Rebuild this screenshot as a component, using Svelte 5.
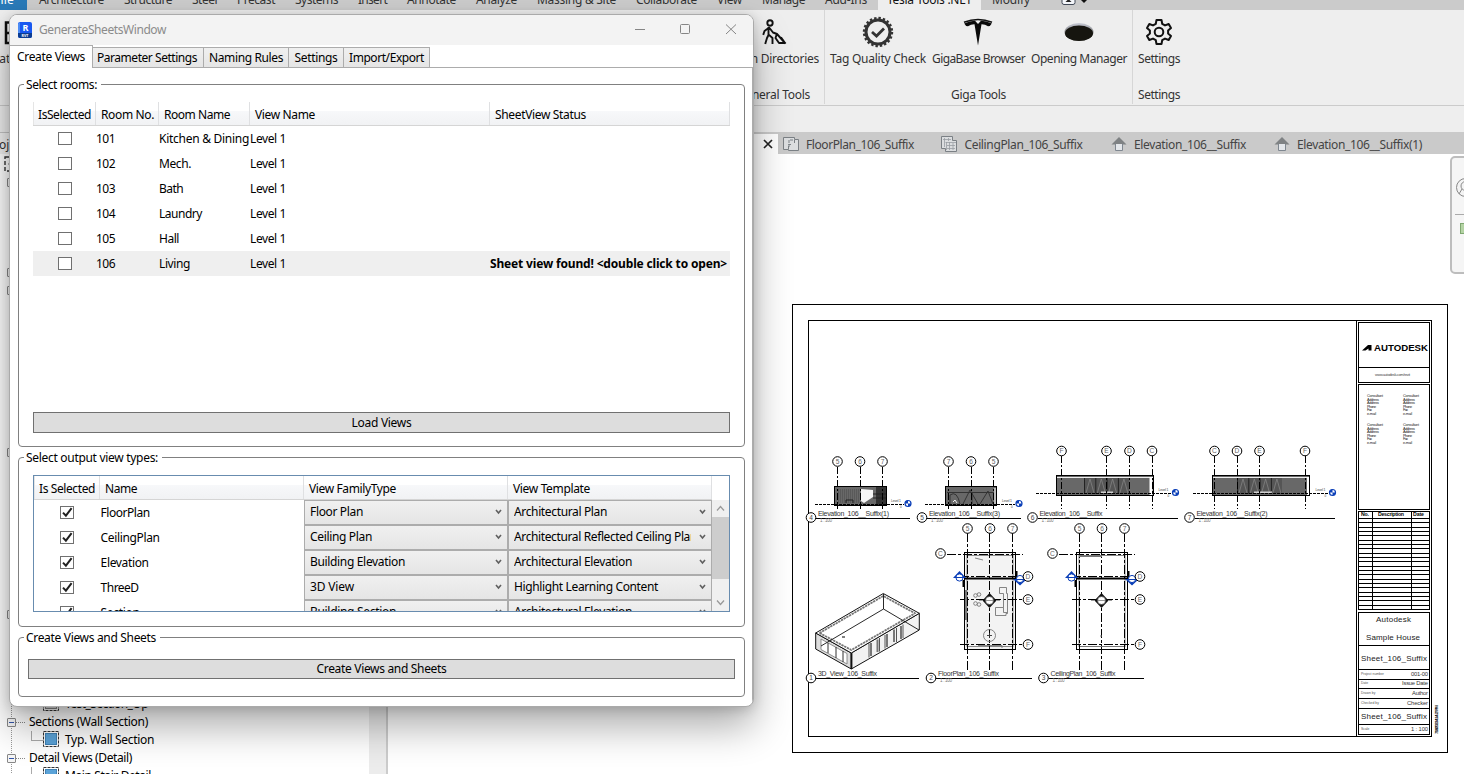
<script>
  // Spreads a label's letters so that it takes up the given width.
  function fit(node, width) {
    const natural = node.getBoundingClientRect().width;
    const count = node.textContent.length;
    if (width && count) node.style.letterSpacing = `${(width - natural) / count}px`;
  }

  const ribbonTabs = [
    ['Architecture', 65], ['Structure', 48], ['Steel', 25], ['Precast', 38], ['Systems', 43],
    ['Insert', 29], ['Annotate', 49], ['Analyze', 41], ['Massing & Site', 79], ['Collaborate', 61],
    ['View', 25], ['Manage', 43], ['Add-Ins', 42], ['Tesla Tools .NET', 85], ['Modify', 38]
  ];
  const viewTabs = [
    ['floor', 'FloorPlan_106_Suffix', 108, 27],
    ['ceiling', 'CeilingPlan_106_Suffix', 118, 28],
    ['house', 'Elevation_106__Suffix', 112, 27.5],
    ['house', 'Elevation_106__Suffix(1)', 125, 0]
  ];
  const dialogTabs = [['Parameter Settings', 100, 111], ['Naming Rules', 74, 85], ['Settings', 43, 55], ['Import/Export', 75, 86]];
  const rooms = [
    ['101', 'Kitchen & Dining', 90], ['102', 'Mech.', 32], ['103', 'Bath', 24],
    ['104', 'Laundry', 43], ['105', 'Hall', 20], ['106', 'Living', 31]
  ];
  const types = [
    ['FloorPlan', 49, 'Floor Plan', 53, 'Architectural Plan', 93],
    ['CeilingPlan', 59, 'Ceiling Plan', 62, 'Architectural Reflected Ceiling Plan', 183],
    ['Elevation', 48, 'Building Elevation', 95, 'Architectural Elevation', 118],
    ['ThreeD', 38, '3D View', 44, 'Highlight Learning Content', 144],
    ['Section', 39, 'Building Section', 86, 'Architectural Elevation', 118]
  ];
  // Rows of the project tree that lie behind the dialog; true marks an expandable one.
  const coveredRows = Array.from({ length: 29 }, (_, i) => [0, 5, 6, 15, 24].includes(i));

  const elevations = [
    { n: '4', x: 834.5, w: 52, top: 486.5, h: 19, cy: 461.5, grids: [[837.5, '5'], [860, '6'], [882.5, '7']], l0: 815, l1: 904, m: 908, ly: 504.5, t: 811, name: 'Elevation_106__Suffix(1)', nw: 71, end: 910, kind: 'a' },
    { n: '5', x: 945.5, w: 51, top: 486.5, h: 19, cy: 461.5, grids: [[948.5, '7'], [971, '6'], [993.5, '5']], l0: 925, l1: 1015, m: 1019, ly: 504.5, t: 922, name: 'Elevation_106__Suffix(3)', nw: 71, end: 1021, kind: 'b' },
    { n: '6', x: 1056.5, w: 97, top: 475.5, h: 20, cy: 451, grids: [[1061.5, 'F'], [1106.5, 'E'], [1129.5, 'D'], [1152, 'C']], l0: 1036, l1: 1171, m: 1175.5, ly: 493.5, t: 1032.5, name: 'Elevation_106__Suffix', nw: 63, end: 1178, kind: 'c', doors: 1084 },
    { n: '7', x: 1212.5, w: 97, top: 475.5, h: 20, cy: 451, grids: [[1214.5, 'C'], [1237, 'D'], [1259.5, 'E'], [1305, 'F']], l0: 1193, l1: 1328, m: 1332.5, ly: 493.5, t: 1189.5, name: 'Elevation_106__Suffix(2)', nw: 71, end: 1335, kind: 'c', doors: 1237 }
  ];
  const plans = [
    { dx: 0, n: '2', t: 931, name: 'FloorPlan_106_Suffix', nw: 61, end: 1032, fill: '#f3f3f3' },
    { dx: 112, n: '3', t: 1043.5, name: 'CeilingPlan_106_Suffix', nw: 65, end: 1144, fill: '#fff' }
  ];
  const scheduleRows = Array.from({ length: 22 }, (_, i) => Math.round(518 + i * 4.333) + 0.5);
  const consultant = ['Consultant', 'Address', 'Address', 'Phone', 'Fax', 'e-mail'];
  const fields = [['Project number', '001-00', 676, 17], ['Date', 'Issue Date', 685, 26], ['Drawn by', 'Author', 695, 16], ['Checked by', 'Checker', 705, 21], ['Scale', '1 : 100', 731, 17]];
</script>

{#snippet check(on)}
  <span class="check">
    {#if on}<svg width="11" height="11" viewBox="0 0 11 11"><path d="M1 5.6 L3.9 8.6 L9.6 1.2" fill="none" stroke="#212121" stroke-width="2" /></svg>{/if}
  </span>
{/snippet}

{#snippet bubble(x, y, label)}
  <circle cx={x} cy={y} r="4.8" fill="#fff" stroke="#000" />
  <text x={x} y={y + 2.4} font-size="6.6" text-anchor="middle" fill="#666">{label}</text>
{/snippet}

{#snippet title(t, n, name, nw, end, base, scale)}
  <path d="M{t + 5} {base + 2.5} H{end}" class="ln" />
  <circle cx={t} cy={base + 2} r="4.8" fill="#fff" stroke="#000" />
  <text x={t} y={base + 4.4} font-size="6.6" text-anchor="middle" fill="#444">{n}</text>
  <text x={t + 7} y={base} font-size="7" textLength={nw} fill="#333">{name}</text>
  {#if scale}<text x={t + 9} y={base + 6.4} font-size="4.6" textLength="12" fill="#777">1 : 100</text>{/if}
{/snippet}

{#snippet house()}
  <svg width="16" height="16" viewBox="0 0 16 16"><path d="M8 1 L15.5 8.5 H.5 Z" fill="#7f8284" /><path d="M4.5 8 V14.5 H11.5 V8" fill="#e3e6ea" stroke="#7f8790" /></svg>
{/snippet}

<div class="app">
  <div class="menubar">
    <div class="file"><span use:fit={20}>File</span></div>
    {#each ribbonTabs as [name, w]}
      <div class="rtab" class:active={name.startsWith('Tesla')}><span use:fit={w}>{name}</span></div>
    {/each}
    <svg class="ribbon-mode" width="28" height="10" viewBox="0 0 28 10"><rect x="1" y="-6" width="13" height="10.5" rx="2" fill="#f4f6fa" stroke="#424a58" /><path d="M4.5 2 L7.5 -1 L10.5 2 Z" fill="#222" /><path d="M19 -1 H27 L23 3 Z" fill="#111" /></svg>
  </div>

  <div class="ribbon">
    <section class="left-panel">
      <div class="btn">
        <svg width="32" height="32" viewBox="0 0 32 32"><path d="M6 6.5 H30 V27 H6 Z M6 17 H30 M13 6 V27" fill="none" stroke="#111" stroke-width="2.5" /></svg>
        <span>Locator</span>
      </div>
    </section>
    <section class="general">
      <div class="btn">
        <svg width="32" height="32" viewBox="0 0 32 32"><g fill="none" stroke="#111" stroke-width="1.9" stroke-linecap="square" stroke-linejoin="round"><circle cx="12" cy="7" r="2.7" /><path d="M10.5 12 L6.5 15 L5.5 18 M10.5 12 V19 L9 22 L7.5 27 M11 19 L14.5 22 V27 M11.5 12 L15 16.5 L19 18 L27 27 M18.5 19 L17.5 22 L21 27 H27 L23.5 22" /></g></svg>
        <span use:fit={91}>Open Directories</span>
      </div>
      <h3><span use:fit={73}>General Tools</span></h3>
    </section>
    <section class="giga">
      <div class="btns">
        <div class="btn">
          <svg width="32" height="32" viewBox="0 0 32 32"><circle cx="16" cy="16" r="14" fill="none" stroke="#333" stroke-width="2.4" stroke-dasharray="2.4 2" /><circle cx="16" cy="16" r="12" fill="none" stroke="#333" stroke-width="3" /><path d="M10 16 L14.5 20 L22 12.5" fill="none" stroke="#333" stroke-width="2.8" /></svg>
          <span use:fit={96}>Tag Quality Check</span>
        </div>
        <div class="btn">
          <svg width="32" height="32" viewBox="0 0 32 32"><path d="M1 6.2 Q15 .8 29 6.2" fill="none" stroke="#111" stroke-width="1.6" /><path d="M1.2 7.5 Q7 4.7 12 4.8 L15 8 L18 4.8 Q23 4.7 28.8 7.5 Q27.5 10.2 25 10.3 Q22 8.1 18.5 8.2 L15 29.5 L11.5 8.2 Q8 8.1 5 10.3 Q2.5 10.2 1.2 7.5Z" fill="#0a0a0a" /></svg>
          <span use:fit={93}>GigaBase Browser</span>
        </div>
        <div class="btn">
          <svg width="32" height="32" viewBox="0 0 32 32"><defs><linearGradient id="rim" x2="0" y2="1"><stop stop-color="#c8cbd6" /><stop offset=".6" stop-color="#777" /></linearGradient></defs><ellipse cx="16" cy="16" rx="14.5" ry="9" fill="url(#rim)" /><ellipse cx="16" cy="17.2" rx="14" ry="7.8" fill="#16150f" /></svg>
          <span use:fit={96}>Opening Manager</span>
        </div>
      </div>
      <h3><span use:fit={55}>Giga Tools</span></h3>
    </section>
    <section class="settings">
      <div class="btn">
        <svg width="32" height="32" viewBox="0 0 32 32"><g fill="none" stroke="#111" stroke-width="2" stroke-linejoin="round"><circle cx="16" cy="16" r="4.3" /><path d="M13.5 4 H18.5 L19.2 7.8 L22 9.4 L25.7 8 L28 12 L25.1 14.5 V17.5 L28 20 L25.7 24 L22 22.6 L19.2 24.2 L18.5 28 H13.5 L12.8 24.2 L10 22.6 L6.3 24 L4 20 L6.9 17.5 V14.5 L4 12 L6.3 8 L10 9.4 L12.8 7.8 Z" /></g></svg>
        <span use:fit={42}>Settings</span>
      </div>
      <h3><span use:fit={42}>Settings</span></h3>
    </section>
  </div>

  <div class="options"></div>

  <div class="workspace">
    <aside>
      <header>Project</header>
      <div class="tree">
        <div class="node root"><svg width="16" height="16" viewBox="0 0 16 16"><rect x="1" y="1" width="14" height="14" fill="none" stroke="#333" stroke-width="1.4" stroke-dasharray="4 2" /><circle cx="8" cy="8" r="3" fill="none" stroke="#333" /></svg></div>
        {#each coveredRows as open}
          <div class="node">{#if open}<i class="exp"></i>{/if}</div>
        {/each}
        <div class="node leaf"><svg width="16" height="16" viewBox="0 0 16 16"><rect x=".5" y=".5" width="15" height="15" fill="none" stroke="#333" stroke-dasharray="3 1" /><rect x="2.5" y="2.5" width="11" height="11" fill="#ddd" stroke="#888" /></svg><span use:fit={83}>Test_Section_Op</span></div>
        <div class="node"><i class="exp"></i><b></b><span use:fit={119}>Sections (Wall Section)</span></div>
        <div class="node leaf blue"><svg width="16" height="16" viewBox="0 0 16 16"><rect x=".5" y=".5" width="15" height="15" fill="none" stroke="#333" stroke-dasharray="3 1" /><rect x="2.5" y="2.5" width="11" height="11" fill="#5ba3d8" stroke="#3f82b5" /></svg><span use:fit={89}>Typ. Wall Section</span></div>
        <div class="node"><i class="exp"></i><b></b><span use:fit={103}>Detail Views (Detail)</span></div>
        <div class="node leaf blue"><svg width="16" height="16" viewBox="0 0 16 16"><rect x=".5" y=".5" width="15" height="15" fill="none" stroke="#333" stroke-dasharray="3 1" /><rect x="2.5" y="2.5" width="11" height="11" fill="#5ba3d8" stroke="#3f82b5" /></svg><span use:fit={86}>Main Stair Detail</span></div>
      </div>
      <div class="tree-scroll"></div>
    </aside>

    <main>
      <nav>
        <div class="open-view"><svg width="10" height="10" viewBox="0 0 10 10"><path d="M1 1 L9 9 M9 1 L1 9" stroke="#222" stroke-width="1.7" /></svg></div>
        {#each viewTabs as [icon, name, w, gap]}
          <div class="vtab" style:margin-right="{gap}px">
            {#if icon === 'house'}
              {@render house()}
            {:else if icon === 'floor'}
              <svg width="16" height="16" viewBox="0 0 16 16"><path d="M.5 1.5 H11.5 V3.5 H15.5 V14.5 H5.5 V13.5 H.5 Z" fill="#dcdee0" stroke="#7b8085" /><path d="M5.5 13 V8.5 H9 M11.5 4 V7.5 M6 11 V4 H11" fill="none" stroke="#7b8085" stroke-dasharray="3 1" /></svg>
            {:else}
              <svg width="16" height="16" viewBox="0 0 16 16"><path d="M.5 .5 H11.5 V4.5 H15.5 V15.5 H4.5 V12.5 H.5 Z" fill="#dcdee0" stroke="#7b8085" /><path d="M2 3.5 H10 M3.5 2 V11 M7.5 2 V5 M4.5 6.5 H15 M5.5 6 V14 M8.5 6 V14 M12 7 V14 M6 9.5 H14 M6 12.5 H14" fill="none" stroke="#999ea3" stroke-width=".8" /></svg>
            {/if}
            <span use:fit={w}>{name}</span>
          </div>
        {/each}
      </nav>

      <svg class="sheet" width="1076" height="620" viewBox="388 154 1076 620">
        <g class="ln">
          <rect x="792.5" y="304.5" width="655" height="448" />
          <rect x="808.5" y="320.5" width="623" height="416" />
          <path d="M1356.5 320 V736" />
          <rect x="1358.5" y="322.5" width="71" height="60" /><path d="M1358 367.5 H1430" />
          <rect x="1358.5" y="384.5" width="71" height="125" />
          <rect x="1358.5" y="511.5" width="71" height="98" />
          <path d="M1372.5 511 V610 M1411.5 511 V610" />
          {#each scheduleRows as y}<path d="M1358 {y} H1430" />{/each}
          <rect x="1358.5" y="612.5" width="71" height="122" />
          <path d="M1358 645.5 H1430 M1358 669.5 H1430 M1358 679.5 H1430 M1358 688.5 H1430 M1358 698.5 H1430 M1358 708.5 H1430 M1358 724.5 H1430" />
        </g>
        <path d="M1362 350.5 L1368 345 H1371.5 V350.5 H1368.5 V348.5 L1365.5 350.5 Z" fill="#000" />
        <text x="1374" y="351.3" font-size="8.6" font-weight="700" textLength="54" lengthAdjust="spacingAndGlyphs">AUTODESK</text>
        <text x="1375" y="376" font-size="3.8" textLength="35" fill="#444">www.autodesk.com/revit</text>
        {#each [[1367, 397], [1403, 397], [1367, 426], [1403, 426]] as [x, y]}
          {#each consultant as line, i}<text {x} y={y + i * 3.6} font-size="3.8" fill="#222" textLength={[16, 12, 12, 9, 5, 9][i]}>{line}</text>{/each}
        {/each}
        <g font-size="5.2" font-weight="700"><text x="1361" y="516.3" textLength="8">No.</text><text x="1378" y="516.3" textLength="26">Description</text><text x="1413" y="516.3" textLength="11">Date</text></g>
        <g font-size="8" fill="#222">
          <text x="1376" y="621.5" textLength="35">Autodesk</text>
          <text x="1366" y="639.5" textLength="54">Sample House</text>
          <text x="1361" y="660.5" textLength="66">Sheet_106_Suffix</text>
          <text x="1361" y="718.5" textLength="66">Sheet_106_Suffix</text>
        </g>
        {#each fields as [k, v, y, w]}
          <text x="1361" y={y - 1} font-size="3.4" fill="#555">{k}</text>
          <text x={1428 - w} {y} font-size="5.8" fill="#333" textLength={w}>{v}</text>
        {/each}
        <text transform="translate(1437.5 734) rotate(-90)" font-size="4.4" font-weight="700" textLength="29">7/18/2023 4:14:27 PM</text>

        {#each elevations as e}
          <rect x={e.x} y={e.top} width={e.w} height={e.h} fill="#686868" />
          {#if e.kind === 'a'}
            {#each Array.from({ length: 11 }, (_, i) => e.x + 4 + i * 2) as x}<path d="M{x} 489 V503" stroke="#555" stroke-width=".8" />{/each}
            <rect x="876" y="487" width="11" height="18" fill="#333" />
            <path d="M861 489 L873 490 V497 L864 503 L861 501 Z" fill="#f6f6f6" /><path d="M873 494 H886 M873 498 H886 M846 503 V500 H853 V503" stroke="#222" fill="none" />
          {:else if e.kind === 'b'}
            <path d="M947 492.5 H994 M950 504 V495 Q957 490 960 504 M963 504 L970 490 L978 504 M972 492 V504 M980 504 L988 491 L993 504" fill="none" stroke="#333" />
            <path d="M953 502 L955 500 L957 503" stroke="#eee" fill="none" /><rect x="994" y="488" width="2.5" height="17" fill="#bbb" />
          {:else}
            <rect x={e.doors} y="478" width="45" height="16" fill="#555" />
            {#each [0, 1, 2, 3] as i}<path d="M{e.doors + 2 + i * 11.3} 493 L{e.doors + 6 + i * 11.3} 479 L{e.doors + 10 + i * 11.3} 493" fill="none" stroke="#8a8a8a" stroke-width=".7" /><path d="M{e.doors + 0.5 + i * 11.3} 478 V494" stroke="#222" />{/each}
            <path d="M{e.x} 477.5 H{e.x + e.w}" stroke="#eee" stroke-width="1.2" />
            <rect x={e.n === '6' ? 1149.5 : 1307} y="477" width={3} height="18" fill="#fff" />
            <path d="M{e.doors + 17} 492.2 h{e.n === '6' ? 12 : 18}" stroke="#eee" stroke-width="1.2" />
          {/if}
          <rect x={e.x} y={e.top} width={e.w} height={e.h} class="ln" stroke-width="1.4" />
          <path d="M{e.l0} {e.ly} H{e.l1}" class="ln" stroke-dasharray="3 1" />
          <text x={e.m - 17} y={e.ly - 2.2} font-size="3.4" textLength="10" fill="#444">Level 1</text>
          <text x={e.m - 8} y={e.ly + 3} font-size="3" fill="#444">0</text>
          <circle cx={e.m} cy={e.ly - 1} r="3" fill="#fff" stroke="#0b3fb8" stroke-width="1.2" /><path d="M{e.m} {e.ly - 1} h-3 a3 3 0 0 1 3 -3 z M{e.m} {e.ly - 1} h3 a3 3 0 0 1 -3 3 z" fill="#0b3fb8" />
          {#each e.grids as [x, g]}
            <path d="M{Math.floor(x) + 0.5} {e.cy + 5} V509" class="ln" stroke-dasharray="7 2 2 2" />
            {@render bubble(x, e.cy, g)}
          {/each}
          {@render title(e.t, e.n, e.name, e.nw, e.end, 515.5, true)}
        {/each}

        {#each plans as p}
          <g transform="translate({p.dx} 0)">
            <rect x="964.5" y="552.5" width="51" height="97" fill={p.fill} />
            <rect x="964.5" y="552.5" width="51" height="97" class="ln" stroke-width="1.4" />
            <rect x="967" y="555.5" width="46" height="91" fill="none" stroke="#888" />
            <path d="M964 578.5 H1016" stroke="#000" stroke-width="1.8" />
            <path d="M963.5 580 V587 M1016.5 571 V578" stroke="#000" stroke-width="2" />
            <path d="M967.5 533 V670 M989.5 533 V670 M1012.5 533 V670" class="ln" stroke-dasharray="9 2 3 2" />
            <path d="M947 554.5 H1023 M960 576.5 H1024 M960 599.5 H1024 M960 644.5 H1024" class="ln" stroke-dasharray="9 2 3 2" />
            {#if p.dx === 0}
              <g fill="none" stroke="#777" stroke-width=".9"><path d="M999.5 587.5 H1006.5 V593.5 H1007.5 V613.5 H1006 V615.5 H995.5 V607.5 H1003.5 V593.5 H999.5 Z M1003.5 607.5 V612.5 H1007" /><circle cx="989.5" cy="635.5" r="6" /><path d="M987 635.5 H992 M989.5 633 V638" stroke="#333" /><circle cx="975.5" cy="595.5" r="1.8" /><circle cx="979" cy="594.5" r="1.8" /><circle cx="975.5" cy="603.5" r="1.8" /><circle cx="979" cy="604.5" r="1.8" /><path d="M975 558 L983 560 M978 645.5 H1002 V648" /></g>
              <path d="M966 590 V620" stroke="#777" stroke-width="2" />
            {:else}
              <path d="M967 556 H990" stroke="#777" stroke-width="2" /><path d="M988 636 H990 M968 646.5 H1012" stroke="#777" />
            {/if}
            <path d="M982.5 600.5 L989.5 593 L996.5 600.5 L989.5 608 Z" fill="#111" /><circle cx="989.5" cy="600.5" r="4" fill="#fff" stroke="#333" stroke-width=".6" /><path d="M979 600.5 H983 M996 600.5 H1000 M986 600.5 H993" stroke="#999" />
            <path d="M953 578 L959.5 571 L966 578 Z M1013 579 H1027 L1020 585.5 Z" fill="#0b3fb8" />
            <circle cx="959.5" cy="577.5" r="3.6" fill="#fff" stroke="#0b3fb8" /><circle cx="1020" cy="579" r="3.6" fill="#fff" stroke="#0b3fb8" />
            <path d="M954 577.5 H965 M1014 579.5 H1026" stroke="#0b3fb8" />
            {@render bubble(967.5, 528.5, '5')}{@render bubble(990, 528.5, '6')}{@render bubble(1012.5, 528.5, '7')}
            {@render bubble(940.5, 553.5, 'C')}{@render bubble(1028, 576.5, 'D')}{@render bubble(1028, 599.5, 'E')}{@render bubble(1028, 644.5, 'F')}
          </g>
          {@render title(p.t, p.n, p.name, p.nw, p.end, 676, true)}
        {/each}

        <g fill="none" stroke="#111" stroke-linejoin="round">
          <path d="M815.7 633 L851.3 653 V669 L815.7 649 Z" fill="#ddd" />
          <path d="M851.3 653 L919.3 613.3 V630 L851.3 669 Z" fill="#f1f1f1" />
          <path d="M821 639 L847 653.5 V664 L821 649.5 Z" fill="#fff" stroke="#777" stroke-width=".8" /><path d="M828 643 V653 M836 647 V658 M843 651 V662" stroke="#333" />
          <path d="M871 643 V656 M877.5 639.5 V652 M887 634 V647 M894 629.5 V642 M901 626 V639" stroke="#777" stroke-width="2" /><path d="M869 643.5 V657.5 M879.5 638 V651.5 M885 635 V648.5 M896.5 628 V642 M903 624.5 V638" stroke-width=".7" />
          <path d="M815.7 633 L883.3 593.5 L919.3 613.3 L851.3 653 Z" fill="#fff" />
          <path d="M819.5 633 L883.3 596 L915 613.3 L851.3 650 Z" stroke="#777" stroke-width="1.8" stroke-dasharray="2.4 .7" />
          <path d="M883.5 594 V609 L821 646 M883.5 609 L919 630" stroke-width=".9" />
          <path d="M851.5 653 V669" stroke-width="1.8" /><path d="M842 637 H845" stroke="#555" stroke-width="1.5" />
        </g>
        {@render title(811, '1', '3D_View_106_Suffix', 59, 919, 676, false)}
      </svg>
    </main>
  </div>

  <div class="navbar">
    <svg width="20" height="115" viewBox="0 0 20 115"><circle cx="13.5" cy="29.5" r="9" fill="#f3f3f3" stroke="#888" /><circle cx="13.5" cy="28" r="4.5" fill="none" stroke="#888" /><path d="M7 36 L10 31" stroke="#888" /><path d="M3 56.5 H20" stroke="#aaa" /><rect x="8.5" y="65.5" width="12" height="10" fill="#b4d3a4" stroke="#7fa771" /></svg>
  </div>

  <div class="dialog">
    <div class="titlebar">
      <svg width="16" height="18" viewBox="0 0 16 18"><rect x="0" y="1" width="14" height="16" rx="2" fill="#1858f0" /><path d="M0 3 L2 1 V12 H0 Z" fill="#4c8cf5" /><path d="M0 12 H14 V15 Q14 17 12 17 H2 Q0 17 0 15Z" fill="#0b3c91" /><text x="7.5" y="10" font-size="9" font-weight="700" text-anchor="middle" fill="#fff">R</text><text x="7" y="15.7" font-size="3.6" font-weight="700" text-anchor="middle" fill="#fff">RVT</text></svg>
      <span class="caption" use:fit={127}>GenerateSheetsWindow</span>
      <svg class="wincontrols" width="110" height="30" viewBox="0 0 110 30"><g fill="none" stroke="#858585"><path d="M5 14.5 H15" /><rect x="50.5" y="9.5" width="9" height="9" rx="1" /><path d="M96 9.5 L106 19 M106 9.5 L96 19" /></g></svg>
    </div>
    <div class="tabs">
      <div class="tab on"><span use:fit={68}>Create Views</span></div>
      {#each dialogTabs as [name, w, box]}<div class="tab" style:width="{box}px"><span use:fit={w}>{name}</span></div>{/each}
    </div>
    <div class="body">
      <section class="group g1">
        <h4><span use:fit={71}>Select rooms:</span></h4>
        <div class="list">
          <div class="head rooms">
            <div><span use:fit={53}>IsSelected</span></div><div><span use:fit={53}>Room No.</span></div><div><span use:fit={66}>Room Name</span></div><div><span use:fit={60}>View Name</span></div><div><span use:fit={91}>SheetView Status</span></div>
          </div>
          {#each rooms as [no, name, w], i}
            <div class="row rooms" class:hot={i === 5}>
              <div class="c">{@render check(false)}</div>
              <div><span use:fit={19}>{no}</span></div><div><span use:fit={w}>{name}</span></div><div><span use:fit={36}>Level 1</span></div>
              <div>{#if i === 5}<strong use:fit={237}>Sheet view found! &lt;double click to open&gt;</strong>{/if}</div>
            </div>
          {/each}
        </div>
        <button><span use:fit={60}>Load Views</span></button>
      </section>

      <section class="group g2">
        <h4><span use:fit={132}>Select output view types:</span></h4>
        <div class="grid">
          <div class="head kinds"><div><span use:fit={56}>Is Selected</span></div><div><span use:fit={32}>Name</span></div><div><span use:fit={87}>View FamilyType</span></div><div><span use:fit={77}>View Template</span></div></div>
          <div class="gridbody">
            <div class="rows">
              {#each types as [name, nw, fam, fw, tpl, tw]}
                <div class="row kinds">
                  <div class="c">{@render check(true)}</div>
                  <div class="nm"><span use:fit={nw}>{name}</span></div>
                  {#each [[fam, fw], [tpl, tw]] as [text, w]}
                    <div class="combo"><div class="clip"><span use:fit={w}>{text}</span></div><svg width="7" height="6" viewBox="0 0 7 6"><path d="M1 1 L3.5 4 L6 1" fill="none" stroke="#606060" stroke-width="1.6" /></svg></div>
                  {/each}
                </div>
              {/each}
            </div>
            <div class="scroll">
              <svg width="17" height="17" viewBox="0 0 17 17"><path d="M5 10.5 L8.5 6.5 L12 10.5" fill="none" stroke="#999" stroke-width="1.3" /></svg>
              <div class="thumb"></div>
              <svg width="17" height="17" viewBox="0 0 17 17"><path d="M5 6.5 L8.5 10.5 L12 6.5" fill="none" stroke="#999" stroke-width="1.3" /></svg>
            </div>
          </div>
        </div>
      </section>

      <section class="group g3">
        <h4><span use:fit={130}>Create Views and Sheets</span></h4>
        <button><span use:fit={130}>Create Views and Sheets</span></button>
      </section>
    </div>
  </div>
</div>

<style>
  :global(body) { margin: 0; overflow: hidden; }
  .app { position: relative; width: 1464px; height: 774px; overflow: hidden; background: #fff; font: 12px/16px "Noto Sans", "Open Sans", sans-serif; color: #000; display: flex; flex-direction: column; }
  .app * { box-sizing: border-box; }
  span, strong { white-space: pre; display: inline-block; }
  svg { display: block; flex: none; }
  h3, h4 { margin: 0; font-size: 12px; font-weight: 400; }

  .menubar { height: 10px; background: #cbcbcb; display: flex; overflow: hidden; color: #333; flex: none; }
  .menubar span { margin-top: -8px; }
  .file { width: 27px; margin-right: 2px; background: #2a7ab8; color: #fff; display: flex; align-items: flex-start; justify-content: flex-end; padding-right: 13px; }
  .rtab { padding: 0 10px; flex: none; display: flex; align-items: flex-start; }
  .rtab.active { background: #eee; padding: 0 9px; margin: 0 1px; color: #111; }
  .ribbon-mode { margin-left: 21px; }

  .ribbon { height: 96px; flex: none; background: #eee; border-bottom: 1px solid #cbcbcb; display: flex; color: #333; }
  .ribbon section { padding: 6px 5px 0; border-right: 1px solid #d6d6d6; display: flex; flex-direction: column; align-items: center; height: 94px; flex: none; }
  .ribbon .left-panel { width: 15px; padding-left: 0; align-items: flex-start; border: 0; }
  .ribbon .left-panel .btn { align-items: flex-start; }
  .left-panel .btn span { margin-left: -20px; }
  .ribbon .general { width: 810px; align-items: flex-end; }
  .ribbon .general h3 { margin-right: 9px; }
  .ribbon .settings { border: 0; }
  .btns { display: flex; gap: 6px; }
  .btn { display: flex; flex-direction: column; align-items: center; gap: 3px; height: 71px; }
  .options { height: 26px; flex: none; background: #eee; }

  .workspace { flex: 1; display: flex; min-height: 0; }
  aside { width: 388px; border-right: 2px solid #ccc; display: grid; grid-template: 22px 620px / 1fr 17px; background: #fff; overflow: hidden; }
  aside header { grid-column: 1 / 3; background: #f0f0f0; border-top: 1px solid #c4c4c4; color: #333; padding: 4px 0 0; text-indent: -13px; }
  .tree { overflow: hidden; padding: 1px 0 0 7px; background: repeating-linear-gradient(#999 0 1px, #fff 1px 2px) 11px 0 / 1px 100% no-repeat; }
  .node { height: 18px; display: flex; align-items: center; }
  .node span { margin-top: -1px; }
  .node.root { margin-left: -3px; }
  .node.leaf { padding-left: 36px; gap: 6px; }
  .node.leaf svg { margin-top: -2px; }
  .node.leaf.blue { background: linear-gradient(#aaa, #aaa) 24px 9px / 12px 1px no-repeat, linear-gradient(#aaa, #aaa) 24px 0 / 1px 9px no-repeat; }
  .exp { width: 9px; height: 9px; border: 1px solid #888; border-radius: 1px; background: linear-gradient(#35a, #35a) center / 5px 1px no-repeat #f6f6f6; }
  .node b { width: 9px; margin-right: 4px; border-top: 1px dotted #888; }
  .tree-scroll { background: #ececec; }
  main { width: 1076px; display: flex; flex-direction: column; }
  nav { height: 22px; flex: none; background: #cacaca; display: flex; align-items: flex-end; color: #444; }
  .open-view { width: 390px; height: 20px; background: #fff; display: flex; align-items: center; justify-content: flex-end; padding-right: 5px; margin-right: 5px; }
  .vtab { display: flex; align-items: center; height: 20px; gap: 8px; margin-left: -.5px; }
  .vtab span { position: relative; top: 1px; left: -.5px; }
  .sheet { font-family: "Liberation Sans", sans-serif; }
  .ln { fill: none; stroke: #000; shape-rendering: crispEdges; }
  .navbar { position: absolute; left: 1450px; top: 156px; width: 24px; height: 118px; border: 2px solid #bdbdbd; border-radius: 5px; background: #f5f5f5; }

  .dialog { position: absolute; left: 9px; top: 14px; width: 745px; height: 693px; border: 1px solid #aaa; border-radius: 8px; background: #fff; box-shadow: 0 20px 38px rgba(0, 0, 0, .32), 0 2px 12px rgba(0, 0, 0, .16); display: flex; flex-direction: column; overflow: hidden; }
  .titlebar { height: 30px; background: #f3f3f3; display: flex; align-items: center; padding-left: 8px; flex: none; color: #8b8b8b; }
  .caption { margin-left: 5px; }
  .wincontrols { margin-left: auto; margin-right: 13px; }
  .tabs { height: 23px; display: flex; align-items: flex-end; border-bottom: 1px solid #acacac; flex: none; }
  .tab { height: 20px; border: 1px solid #acacac; border-width: 1px 1px 0 0; background: linear-gradient(#f0f0f0, #e5e5e5); display: flex; justify-content: center; align-items: center; padding: 1px 0 0; }
  .tab:nth-child(2) { padding-right: 2px; }
  .tab.on { width: 83px; height: 23px; margin-bottom: -1px; background: #fff; padding: 0; }
  .body { flex: 1; padding: 16px 7px 0 8px; border-right: 1px solid #acacac; display: flex; flex-direction: column; }
  .group { border: 1px solid #808080; border-radius: 4px; padding: 0 14px; flex: none; }
  .group h4 { height: 16px; width: fit-content; margin: -8px 0 0 -9px; padding: 0 4px 0 2px; background: #fff; }
  .g1 { height: 363px; margin-bottom: 10px; }
  .g2 { height: 170px; margin-bottom: 10px; }
  .g3 { height: 60px; padding: 0 9px; }
  .group.g3 h4 { margin-left: -4px; }
  .list { height: 310px; margin-top: 9px; }
  .head { height: 24px; background: linear-gradient(#fff 40%, #f7f8fa 41%, #f1f2f4); border-bottom: 1px solid #d5d5d5; box-shadow: inset 1px 0 #e5e5e5; }
  .head > div { border-right: 1px solid #dfe0e2; padding: 5px 0 0 5px; overflow: hidden; }
  .rooms { display: grid; grid-template-columns: 63px 63px 91px 240px 240px; }
  .row { height: 25px; align-items: center; }
  .row.hot { background: #efefef; }
  .c { display: flex; justify-content: center; }
  .check { width: 14px; height: 13px; border: 1px solid #707070; background: #fff; display: flex; align-items: center; justify-content: center; }
  button { display: flex; width: 100%; height: 21px; padding: 0; background: #ddd; border: 1px solid #707070; font: inherit; color: #000; align-items: center; justify-content: center; }
  .g3 button { margin-top: 13px; height: 20px; }
  .grid { height: 137px; border: 1px solid #688caf; margin-top: 9px; overflow: hidden; }
  .kinds { display: grid; grid-template-columns: 66px 204px 204px 204px; width: 678px; }
  .gridbody { display: flex; height: 111px; }
  .rows { width: 678px; overflow: hidden; }
  .rows .nm { padding-left: .6px; }
  .combo { height: 25px; border: 1px solid #acacac; background: linear-gradient(#f0f0f0, #e5e5e5); display: flex; align-items: center; justify-content: space-between; padding: 0 5px 2px; }
  .clip { overflow: hidden; width: 177px; height: 16px; }
  .scroll { width: 17px; background: #f0f0f0; display: flex; flex-direction: column; }
  .thumb { height: 62px; background: #cdcdcd; margin-bottom: auto; flex: none; }
</style>
